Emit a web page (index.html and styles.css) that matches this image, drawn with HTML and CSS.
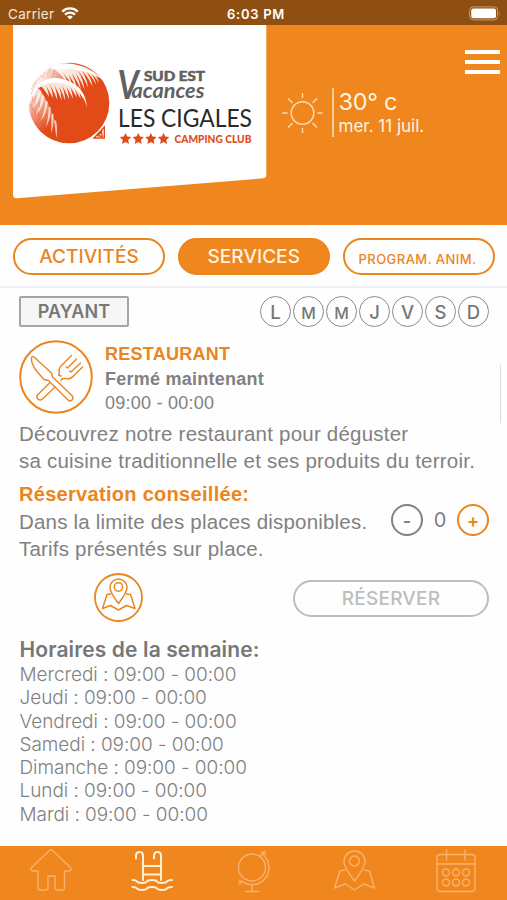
FILE: index.html
```html
<!DOCTYPE html>
<html lang="fr">
<head>
<meta charset="utf-8">
<title>Les Cigales</title>
<link rel="stylesheet" href="styles.css">
</head>
<body>
<div class="status">
  <div class="status-left"><span class="carrier">Carrier</span>
    <svg class="wifi" width="18" height="13" viewBox="0 0 18 13" fill="none" stroke="#fff" stroke-width="2.3"><path d="M1.2 4.6a11.2 11.2 0 0 1 15.6 0M4 7.6a7.2 7.2 0 0 1 10 0"/><path d="M9 12.6L6.2 9.8a4 4 0 0 1 5.6 0z" fill="#fff" stroke="none"/></svg>
  </div>
  <span class="time">6:03 PM</span>
  <svg class="battery" width="33" height="15" viewBox="0 0 33 15"><rect x=".6" y=".9" width="28" height="13" rx="3.5" fill="none" stroke="#c39c78" stroke-width="1"/><rect x="2.2" y="2.5" width="24.8" height="9.8" rx="2" fill="#fff"/><path d="M30.2 5.5q1.6 1.9 0 3.8z" fill="#c39c78"/></svg>
</div>
<header class="header">
  <svg class="logo" width="254" height="174" viewBox="0 0 254 174">
    <defs>
      <clipPath id="sun"><circle cx="141" cy="141" r="123"/></clipPath>
      <linearGradient id="fade" x1="0" y1="0" x2="1" y2=".5"><stop offset=".35" stop-color="#fff"/><stop offset="1" stop-color="#fff" stop-opacity="0"/></linearGradient>
      <linearGradient id="low" x1="0" y1="0" x2=".45" y2="1"><stop offset=".2" stop-color="#fff" stop-opacity=".8"/><stop offset=".9" stop-color="#fff" stop-opacity="0"/></linearGradient>
    </defs>
    <path d="M0 0h253.300v150q0 3-3 3.300L4 173.300q-4 .3-4-4z" fill="#fff"/>
    <g transform="translate(9 31) scale(.3333)">
      <circle cx="141" cy="141" r="121" fill="#e24a18"/>
      <g clip-path="url(#sun)">
        <path d="M10 130Q20 50 100 22Q125 24 150 50L140 72Q90 60 44 92L20 150z" fill="url(#fade)"/>
        <path d="M42 88Q92 145 114 252Q60 240 15 180L12 110z" fill="url(#low)"/>
        <g fill="#fff">
          <path d="M90 25Q180 10 238 68Q180 32 88 40zM42 90Q90 48 150 80Q190 100 195 154Q180 100 142 88Q95 68 50 96z"/>
          <path opacity=".85" d="M98 25q32 25 37 55q-19-28-47-48zM112 24q32 25 38 64q-20-36-48-58zM126 23q31 27 38 75q-20-44-49-68zM140 24q29 27 37 77q-20-46-48-71zM154 26q27 28 34 75q-20-47-45-70zM168 29q24 25 31 66q-19-42-40-60zM182 34q23 22 30 58q-18-37-38-53zM196 40q20 18 27 46q-17-30-33-42zM210 48q16 13 21 32q-14-21-27-29z"/>
          <path opacity=".85" d="M60 73q19 22 21 49q-14-24-30-38zM72 68q19 24 21 58q-15-30-30-49zM84 65q20 26 22 67q-15-36-31-59zM96 64q20 26 23 69q-16-38-32-61zM108 65q19 26 22 69q-15-39-31-61zM120 67q18 25 22 64q-16-35-30-57zM132 71q18 22 21 57q-16-32-29-50zM144 76q17 21 21 49q-16-27-28-42zM156 82q17 20 20 46q-15-26-27-39zM168 92q14 15 17 38q-12-20-22-32z"/>
          <path opacity=".7" d="M48 90q-5 30-27 45q16-28 17-46zM58 104q-4 33-28 53q18-34 20-55zM67 119q-2 34-26 59q17-39 18-60zM77 136q-1 33-21 60q14-38 14-60zM86 154q1 32-14 60q8-37 8-60zM94 173q4 30-7 59q2-35 1-58zM102 193q6 27 1 53q-3-28-7-52z"/>
        </g>
        <g fill="none" stroke="#e24a18" stroke-width="2" opacity=".45"><path d="M40 76l-14 26M47 67l-20 48M58 57l-10 17M70 48l-10 18M84 39l-9 18M98 42l-4 16M30 120l3 18M27 143l6 20M36 159l4 21M49 167l3 24M61 188l4 25M40 120l-2 26M53 137l-1 18"/></g>
      </g>
      <path d="M216 246l31-33v33zM228 239l10-11 3 13zM238 228l3-9" fill="#fff" stroke="#e24a18" stroke-width="4"/>
    </g>
    <text class="vee" transform="translate(104.500 73.500) scale(.82 1)">V</text>
    <text class="sud" x="131" y="55.500" textLength="61" lengthAdjust="spacingAndGlyphs">SUD EST</text>
    <text class="vac" x="118.500" y="72.500" textLength="73" lengthAdjust="spacingAndGlyphs">acances</text>
    <text class="cig" x="105" y="102" textLength="134" lengthAdjust="spacingAndGlyphs">LES CIGALES</text>
    <g fill="#e24a18">
      <path id="star" d="M112.500 108l1.700 3.600 4 .5-3 2.800.8 4-3.500-2-3.500 2 .8-4-3-2.800 4-.5z"/>
      <use href="#star" x="12.700"/><use href="#star" x="25.400"/><use href="#star" x="38.100"/>
    </g>
    <text class="camp" x="161.500" y="118" textLength="77" lengthAdjust="spacingAndGlyphs">CAMPING CLUB</text>
  </svg>
  <div class="weather">
    <svg width="42" height="42" viewBox="0 0 42 42" fill="none" stroke="#fddcae" stroke-width="1.400"><circle cx="20.500" cy="21" r="11.300"/><path d="M20.500 1v5M20.500 36v5M.5 21h5M35.500 21h5M6 6.500l4.500 4.500M30.500 31l4.500 4.500M6 35.500l4.500-4.500M30.500 11l4.500-4.500"/></svg>
    <div class="forecast"><span class="temp">30° c</span><span class="date">mer. 11 juil.</span></div>
  </div>
  <div class="menu"><i></i><i></i><i></i></div>
</header>
<nav class="tabs">
  <a class="tab"><span>ACTIVITÉS</span></a>
  <a class="tab active"><span>SERVICES</span></a>
  <a class="tab small"><span>PROGRAM. ANIM.</span></a>
</nav>
<main class="content">
  <div class="row top">
    <span class="payant">PAYANT</span>
    <div class="days"><b>L</b><b class="m">M</b><b class="m">M</b><b>J</b><b>V</b><b>S</b><b>D</b></div>
  </div>
  <div class="place">
    <svg width="74" height="74" viewBox="0 0 74 74" fill="none" stroke="#ea851f" stroke-width="1.400" stroke-linejoin="round" stroke-linecap="round">
      <circle cx="37" cy="37" r="35.800" stroke-width="2"/>
      <path d="M12.500 17.500Q12 24 17.500 31L25 39.500L29.500 40.500L49 60Q51 62 53 60Q55 58 53 55.500L33.500 37L32.500 33L15 17Q13 16 12.500 17.500z"/>
      <path d="M30.500 43L18.500 55Q17 57 19 59Q21 61 23.500 59L36 47"/>
      <path d="M52.500 15.500L42.500 25.500Q39 29 40.500 32.500L39.500 35L42 36M63.500 27L55 35.500Q51 40 46.500 38.500L43.500 38.500L42 40.500M57.500 19L48.500 28M61.500 23L52 32M48.500 28l-1.500-1M52 32l-1.500-1"/>
    </svg>
    <div class="info"><strong class="name">RESTAURANT</strong><strong class="state">Fermé maintenant</strong><span class="hours">09:00 - 00:00</span></div>
    <i class="scroll"></i>
  </div>
  <p class="desc">Découvrez notre restaurant pour déguster<br><span>sa cuisine traditionnelle et ses produits du terroir.</span></p>
  <div class="row resa">
    <p class="desc"><strong class="advice">Réservation conseillée:</strong>Dans la limite des places disponibles.<br>Tarifs présentés sur place.</p>
    <div class="stepper"><span class="step">-</span><span class="count">0</span><span class="step plus">+</span></div>
  </div>
  <div class="row actions">
    <svg width="50" height="50" viewBox="0 0 50 50" fill="none" stroke="#ea851f" stroke-width="1.500" stroke-linejoin="round"><circle cx="24.500" cy="24.500" r="23.500" stroke-width="1.800"/><path d="M24.500 30.500Q16 19.500 16 14.500a8.500 8.500 0 0 1 17 0Q33 19.500 24.500 30.500zM17 21L13 21.500L8.500 35.500L16.500 32.500L24.500 37L32.500 32.500L41 35.500L36.500 21.500L32 21"/><circle cx="24.500" cy="14" r="4.200"/></svg>
    <a class="reserve"><span>RÉSERVER</span></a>
  </div>
  <section class="week">
    <h2>Horaires de la semaine:</h2>
    <ul><li>Mercredi : 09:00 - 00:00</li><li>Jeudi : 09:00 - 00:00</li><li>Vendredi : 09:00 - 00:00</li><li>Samedi : 09:00 - 00:00</li><li>Dimanche : 09:00 - 00:00</li><li>Lundi : 09:00 - 00:00</li><li>Mardi : 09:00 - 00:00</li></ul>
  </section>
</main>
<footer class="bar">
  <svg viewBox="0 0 44 48"><path d="M8.500 25H4q-3.500-1-1-4L20.500 4.500q1.500-1 3 0L41 21q2.500 3-1 4h-4.500v17q0 2-2 2H28q-2 0-2-2V30h-7v12q0 2-2 2h-6q-2 0-2-2V25z"/></svg>
  <svg class="on" viewBox="0 0 44 48"><path d="M6 12.500V10q0-4 3.500-4T13 10v24M24 12.500V10q0-4 3.500-4T31 10v24M13 20h18M13 28.500h18M2.500 34q3.500 0 4.500 1.500t5 1.500 5-1.500 5-1.500 5 1.500 5 1.500 5-1.500T42 34M2.500 41q3.500 0 4.500 1.500t5 1.500 5-1.500 5-1.500 5 1.500 5 1.500 5-1.500T42 41"/></svg>
  <svg viewBox="0 0 44 48"><circle cx="20" cy="21.500" r="13.500"/><path d="M30 8A17 17 0 0 1 10 35.500M33 5l-5 5M10 35l-3 3M7 35l3 1M20 38.500v6M14 45.500H27M29.500 6l4 2"/></svg>
  <svg viewBox="0 0 44 48"><path d="M21.500 35Q11 21.500 11 15.500a10.500 10.500 0 0 1 21 0Q32 21.500 21.500 35zM12 24L7 25L1.500 42L12.500 38L21.500 44L31 38L41.500 42L36.500 25L31.500 24"/><circle cx="21.500" cy="15" r="5"/></svg>
  <svg viewBox="0 0 44 48"><rect x="3" y="8.500" width="38" height="37" rx="3"/><path d="M3 18h38M12.500 4v10M31 4v10"/><circle cx="12" cy="26.500" r="3.500"/><circle cx="22" cy="26.500" r="3.500"/><circle cx="32" cy="26.500" r="3.500"/><circle cx="12" cy="36.500" r="3.500"/><circle cx="22" cy="36.500" r="3.500"/><circle cx="32" cy="36.500" r="3.500"/></svg>
</footer>
</body>
</html>
```
FILE: styles.css
```css
* { box-sizing: border-box; }
body { margin: 0; width: 507px; height: 900px; overflow: hidden; display: flex; flex-direction: column; background: #fefefe; color: #818181; font-family: Inter, sans-serif; }
p, h2, ul { margin: 0; padding: 0; list-style: none; }
span { white-space: nowrap; }
svg { display: block; flex: none; }

.status { height: 25px; background: #8f4f12; color: #fff; display: grid; grid-template-columns: 1fr auto 1fr; align-items: center; padding: 2px 5px 0 8px; font-size: 13px; }
.status-left { display: flex; align-items: center; gap: 7px; }
.carrier { font-size: 13.5px; letter-spacing: .3px; color: #f8e8d9; }
.time { font-weight: 600; letter-spacing: .7px; margin-left: 2px; }
.battery { justify-self: end; margin-top: -1px; }
.wifi { margin-top: -1px; }

.header { height: 200px; background: #f0861e; display: flex; align-items: flex-start; padding-left: 13px; }
.weather { display: flex; margin: 63px 0 0 15px; color: #fff3df; }
.weather svg { margin-top: 4px; }
.forecast { display: flex; flex-direction: column; margin-left: 7.500px; border-left: 2px solid #fbcf9a; height: 49px; padding-left: 5px; }
.temp { font-size: 23.500px; line-height: 28px; letter-spacing: -.3px; }
.date { font-size: 17px; line-height: 21px; }
.menu { display: flex; flex-direction: column; gap: 6px; margin: 25px 7px 0 auto; }
.menu i { width: 35px; height: 4px; background: #fff; }

.tabs { height: 63px; border-bottom: 2px solid #eef0f2; display: flex; justify-content: space-between; padding: 13px 12.500px 0 13px; }
.tab { width: 152px; height: 37px; border: 2px solid #ea851f; border-radius: 19px; display: flex; align-items: center; justify-content: center; color: #ea851f; font-size: 19px; font-weight: 500; letter-spacing: .05px; }
.active { background: #f0861e; color: #fff3df; }
.small { font-size: 13px; padding: 4px 2px 0 0; letter-spacing: .45px; }

.content { flex: 1; padding: 8px 19px 0; }
.row { display: flex; justify-content: space-between; }
.payant { width: 110px; height: 31px; border: 2px solid #a5a5a5; border-radius: 2px; background: #f6f6f6; display: flex; align-items: center; justify-content: center; color: #777; font-weight: 600; font-size: 18px; letter-spacing: .1px; }
.days { display: flex; gap: 2px; margin-right: -1px; }
.days b { width: 31px; height: 31px; border: 1px solid #8a8a8a; border-radius: 50%; display: flex; align-items: center; justify-content: center; font-weight: 500; font-size: 18.500px; color: #777; }
.days .m { font-size: 16px; padding-top: 2px; }
.place { display: flex; height: 80px; margin-top: 13px; position: relative; }
.info { display: flex; flex-direction: column; margin: 2px 0 0 12px; font-family: "Liberation Sans", sans-serif; font-size: 18px; line-height: 24.500px; letter-spacing: .25px; }
.name { color: #ea851f; }
.scroll { position: absolute; right: -13px; top: 25px; width: 1px; height: 58px; background: #dcdcdc; }
.desc { font-family: "Liberation Sans", sans-serif; font-size: 20.500px; line-height: 27px; letter-spacing: .22px; }
.advice { display: block; color: #ea851f; font-size: 20px; letter-spacing: .3px; }
.resa { margin-top: 7px; }
.resa .desc { letter-spacing: .2px; }
.stepper { display: flex; align-items: center; height: 32px; margin: 23px -1px 0 0; }
.step { width: 32px; height: 32px; border: 2px solid #818181; border-radius: 50%; display: flex; align-items: center; justify-content: center; font-size: 18px; font-weight: 600; }
.plus { color: #ea851f; border-color: #ea851f; }
.count { width: 34px; text-align: center; font-size: 20px; }
.actions { margin-top: 11px; padding-left: 75px; }
.reserve { width: 196px; height: 37px; margin: 7px -1px 0 0; border: 2px solid #bdbdbd; border-radius: 19px; display: flex; align-items: center; justify-content: center; font-size: 19px; letter-spacing: .25px; font-weight: 500; color: #bdbdbd; }
.week { margin-top: 13px; padding-left: .5px; }
.week h2 { font-size: 21px; line-height: 27px; font-weight: 600; letter-spacing: .12px; color: #777; }
.week li { font-size: 19px; line-height: 23.300px; font-weight: 300; letter-spacing: -.06px; }

.bar { height: 54px; background: #f0861e; display: flex; justify-content: space-between; padding: 0 29px; }
.bar svg { width: 44px; height: 48px; fill: none; stroke: #f8b26b; stroke-width: 1.4; stroke-linecap: round; stroke-linejoin: round; }
.bar .on { stroke: #fff0d8; stroke-width: 2; }

.vee { font: italic 700 40px Lato, sans-serif; fill: #626161; }
.sud { font: 900 12.500px Lato, sans-serif; fill: #626161; stroke: #626161; stroke-width: .5; }
.vac { font: italic 700 21px Lato, sans-serif; fill: #626161; }
.cig { font: 400 24.500px Lato, sans-serif; fill: #292929; }
.camp { font: 900 11px Lato, sans-serif; fill: #e24a18; }
```
